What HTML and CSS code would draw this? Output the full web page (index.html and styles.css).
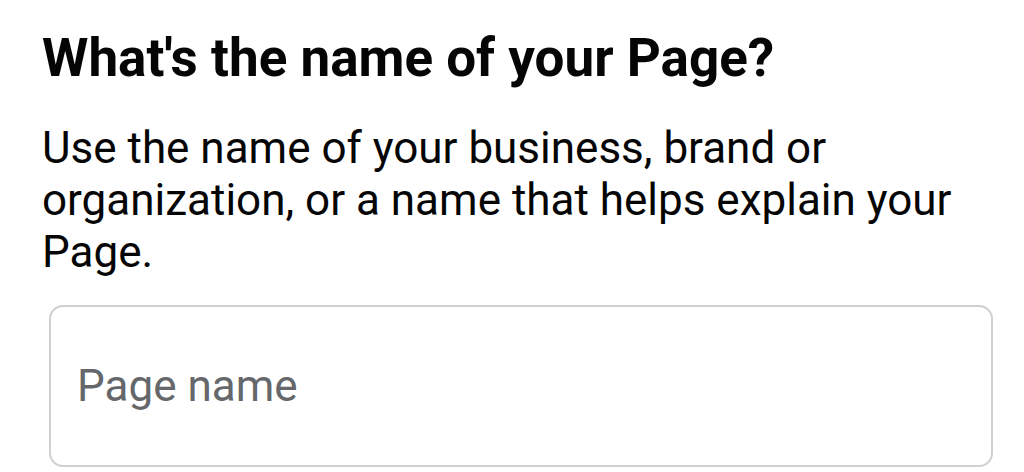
FILE: index.html
```html
<!DOCTYPE html>
<html lang="en">
<head>
    <meta charset="UTF-8">
    <title>Create a Page</title>
    <link rel="stylesheet" href="styles.css">
</head>
<body>
    <div class="page-name">
        <h1 class="title">What's the name of your Page?</h1>
        <p class="hint">Use the name of your business, brand or organization, or a name that helps explain your Page.</p>
        <div class="field">
            <input type="text" class="field-input" placeholder="Page name">
        </div>
    </div>
</body>
</html>
```

FILE: styles.css
```css
body {
    font-family: Roboto, "Liberation Sans", Arial, sans-serif;
    background-color: #fff;
    color: #050505;
    margin: 0;
}

.page-name {
    padding: 27px 31px 0 42px;
}

.title {
    font-size: 53px;
    font-weight: 700;
    line-height: 62px;
    margin: 0;
}

.hint {
    font-size: 44px;
    line-height: 52px;
    margin: 33px 0 0 0;
}

.field {
    margin: 27px 0 0 7px;
}

.field-input {
    display: block;
    width: 100%;
    height: 162px;
    box-sizing: border-box;
    padding: 0 26px;
    border: 2px solid #d0d0d0;
    border-radius: 14px;
    font-family: Roboto, "Liberation Sans", Arial, sans-serif;
    font-size: 44px;
    color: #050505;
    outline: none;
}

.field-input::placeholder {
    color: #65676b;
}
```
